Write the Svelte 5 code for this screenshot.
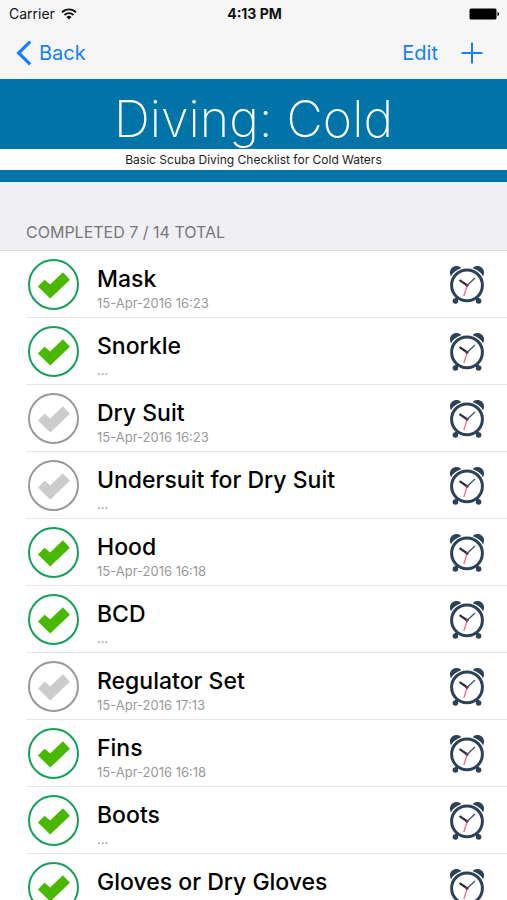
<script>
  let title = 'Diving: Cold';
  let subtitle = 'Basic Scuba Diving Checklist for Cold Waters';
  let completed = 7;
  let total = 14;

  // items without a date show an ellipsis
  let items = [
    { id: 1, name: 'Mask', date: '15-Apr-2016 16:23', done: true },
    { id: 2, name: 'Snorkle', date: '', done: true },
    { id: 3, name: 'Dry Suit', date: '15-Apr-2016 16:23', done: false },
    { id: 4, name: 'Undersuit for Dry Suit', date: '', done: false },
    { id: 5, name: 'Hood', date: '15-Apr-2016 16:18', done: true },
    { id: 6, name: 'BCD', date: '', done: true },
    { id: 7, name: 'Regulator Set', date: '15-Apr-2016 17:13', done: false },
    { id: 8, name: 'Fins', date: '15-Apr-2016 16:18', done: true },
    { id: 9, name: 'Boots', date: '', done: true },
    { id: 10, name: 'Gloves or Dry Gloves', date: '', done: true },
  ];

  function toggle(item) {
    completed += item.done ? 1 : -1;
  }
</script>

<div class="screen">
  <div class="status-bar">
    <div class="carrier">
      <span>Carrier</span>
      <svg width="16" height="12" viewBox="0 0 16 12">
        <g fill="none" stroke="#111" stroke-width="1.8">
          <path d="M1 4.3a10 10 0 0 1 14 0" />
          <path d="M3.5 7a6.4 6.4 0 0 1 9 0" />
        </g>
        <path d="M5.5 9a3.6 3.6 0 0 1 5 0L8 11.6z" fill="#111" />
      </svg>
    </div>
    <strong>4:13 PM</strong>
    <div class="battery">
      <svg width="31" height="12" viewBox="0 0 31 12">
        <rect x="0.5" y="0.5" width="27" height="11" rx="1.5" />
        <path d="M28.5 4c2.2 0.4 2.2 3.6 0 4z" />
      </svg>
    </div>
  </div>

  <nav>
    <button class="back">
      <svg width="16" height="26" viewBox="0 0 16 26">
        <path d="M14.2 1.6L2.6 13l11.6 11.4" fill="none" stroke="currentColor" stroke-width="3.2" />
      </svg>
      Back
    </button>
    <div class="nav-actions">
      <button>Edit</button>
      <button aria-label="Add item">
        <svg width="22" height="22" viewBox="0 0 22 22">
          <path d="M11 0.5v21M0.5 11h21" fill="none" stroke="currentColor" stroke-width="2" />
        </svg>
      </button>
    </div>
  </nav>

  <header>
    <h1>{title}</h1>
    <p>{subtitle}</p>
  </header>

  <h2>COMPLETED {completed} / {total} TOTAL</h2>

  <ul>
    {#each items as item (item.id)}
      <li>
        <input
          id="item-{item.id}"
          type="checkbox"
          bind:checked={item.done}
          on:change={() => toggle(item)}
        />
        <label for="item-{item.id}">
          <span class="name">{item.name}</span>
          <span class="date">{item.date || '...'}</span>
        </label>
        <button class="alarm" aria-label="Set reminder for {item.name}">
          <svg width="36" height="40" viewBox="0 0 36 40">
            <g fill="#2c4258">
              <path d="M1.3 9.5C-0.6 3.5 6-1.2 11.6 2.2L11.8 3.6C7.6 5 4 7.6 2 11.2z" />
              <path d="M34.7 9.5C36.6 3.5 30-1.2 24.4 2.2L24.2 3.6C28.4 5 32 7.6 34 11.2z" />
              <circle cx="6.4" cy="36" r="2.8" />
              <circle cx="29.6" cy="36" r="2.8" />
            </g>
            <path d="M9.5 31.5l-3 4M26.5 31.5l3 4" stroke="#2c4258" stroke-width="3.4" />
            <circle cx="18" cy="20.3" r="15.4" fill="#fff" stroke="#2c4258" stroke-width="3" />
            <path d="M18.5 20.5l-8-5.3" stroke="#26313c" stroke-width="2.2" />
            <path d="M18 20.5l8-7.6" stroke="#3d5a6c" stroke-width="1.4" />
            <path d="M18.4 20L14.8 31" stroke="#e8708a" stroke-width="1.3" />
            <circle cx="18" cy="20.3" r="1.6" fill="#803a50" />
          </svg>
        </button>
      </li>
    {/each}
  </ul>
</div>

<style>
  :global(body) {
    margin: 0;
    background: #efeff4;
  }

  .screen {
    display: flex;
    flex-direction: column;
    height: 100vh;
    overflow: hidden;
    font-family: Inter, "Liberation Sans", sans-serif;
    color: #000;
  }

  button {
    padding: 0;
    border: none;
    background: none;
    font: inherit;
    color: #1680f8;
    cursor: pointer;
  }

  svg {
    display: block;
  }

  .status-bar {
    display: grid;
    grid-template-columns: 1fr auto 1fr;
    align-items: center;
    height: 27px;
    padding: 0 7px 0 9px;
    background: #f6f6f7;
    font-size: 14px;
    line-height: 20px;
    color: #111;
    flex: none;
  }

  .status-bar strong {
    font-weight: 700;
  }

  .carrier {
    display: flex;
    align-items: center;
    gap: 6px;
  }

  .battery {
    display: flex;
    justify-content: flex-end;
  }

  nav {
    display: flex;
    justify-content: space-between;
    align-items: center;
    box-sizing: border-box;
    height: 52px;
    padding: 0 24px 0 16px;
    background: #f6f6f7;
    font-size: 20px;
    line-height: 24px;
    flex: none;
  }

  .back {
    display: flex;
    align-items: center;
    gap: 7px;
  }

  .nav-actions {
    display: flex;
    align-items: center;
    gap: 23px;
  }

  header {
    padding: 10px 0 12px;
    background: #0074a8;
    text-align: center;
    flex: none;
  }

  h1 {
    margin: 0;
    font-size: 50px;
    font-weight: 200;
    line-height: 60px;
    color: #fff;
  }

  header p {
    margin: 0;
    background: #fff;
    font-size: 12px;
    line-height: 21px;
    color: #222;
  }

  h2 {
    margin: 0;
    padding: 40px 26px 8px;
    border-bottom: 1px solid #e0e0e4;
    background: #efeff4;
    font-size: 16px;
    font-weight: 400;
    line-height: 20px;
    color: #77777c;
    flex: none;
  }

  ul {
    flex: 1;
    min-height: 0;
    margin: 0;
    padding: 0 0 0 26px;
    overflow-y: auto;
    scrollbar-width: none;
    list-style: none;
    background: #fff;
  }

  li {
    display: flex;
    align-items: center;
    box-sizing: border-box;
    height: 67px;
    padding: 1px 22px 0 2px;
    border-bottom: 1px solid #e6e6e8;
  }

  input {
    appearance: none;
    box-sizing: border-box;
    width: 51px;
    height: 51px;
    margin: 0;
    border: 2px solid #999;
    border-radius: 50%;
    cursor: pointer;
    flex: none;
  }

  /* the tick */
  input::before {
    content: '';
    display: block;
    width: 47px;
    height: 47px;
    background: #ccc;
    clip-path: polygon(17% 54%, 31% 40%, 43% 50%, 70% 24%, 85% 40%, 43% 80%);
  }

  input:checked {
    border-color: #14a05a;
  }

  input:checked::before {
    background: #48b800;
  }

  label {
    display: flex;
    flex-direction: column;
    flex: 1;
    padding-top: 8px;
    margin-left: 18px;
    cursor: pointer;
  }

  .name {
    font-size: 23px;
    font-weight: 500;
    line-height: 28px;
  }

  .date {
    font-size: 13px;
    line-height: 20px;
    color: #999;
  }
</style>
